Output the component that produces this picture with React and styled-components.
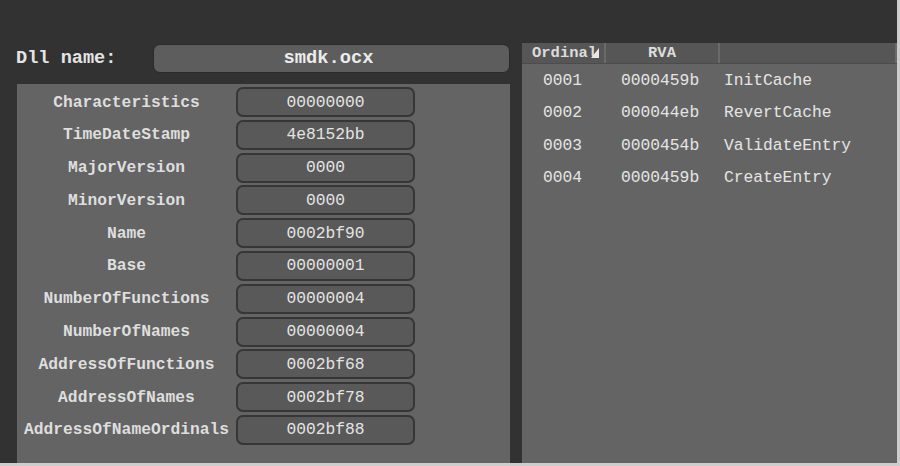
import React from "react";
import styled, { createGlobalStyle } from "styled-components";

const Global = createGlobalStyle`
  html, body {
    margin: 0;
    padding: 0;
    background: #cdcdcd;
  }
`;

const Frame = styled.div`
  width: 897px;
  height: 463px;
  background: #323232;
  box-sizing: border-box;
  padding: 42px 0 0 16px;
  display: grid;
  grid-template-columns: 494px 375px;
  column-gap: 12px;
  font-family: "Liberation Mono", "Courier New", monospace;
  color: #e2e2e2;
`;

const LeftCol = styled.div`
  display: flex;
  flex-direction: column;
  min-height: 0;
`;

const DllRow = styled.div`
  display: flex;
  align-items: center;
  height: 30px;
  margin-top: 1px;
`;

const DllLabel = styled.div`
  width: 137px;
  font-size: 18.6px;
  font-weight: bold;
  color: #e4e4e4;
`;

const DllBox = styled.div`
  flex: 1;
  height: 29px;
  box-sizing: border-box;
  border: 1px solid #2a2a2a;
  border-radius: 7px;
  background: #5d5d5d;
  display: flex;
  align-items: center;
  justify-content: center;
  font-size: 18.8px;
  font-weight: bold;
  color: #ececec;
  padding-right: 6px;
`;

const Panel = styled.div`
  flex: 1;
  margin: 11px 0 0 1px;
  background: #646464;
  padding-top: 3px;
  display: flex;
  flex-direction: column;
  gap: 2.8px;
`;

const Row = styled.div`
  display: grid;
  grid-template-columns: 219px 179px;
  align-items: center;
  height: 30px;
`;

const Label = styled.div`
  text-align: center;
  font-size: 16.3px;
  font-weight: bold;
  color: #dedede;
  white-space: nowrap;
`;

const ValueBox = styled.div`
  height: 30px;
  box-sizing: border-box;
  border: 2px solid #363636;
  border-radius: 7px;
  background: #595959;
  display: flex;
  align-items: center;
  justify-content: center;
  font-size: 16.3px;
  color: #e4e4e4;
`;

const RightPanel = styled.div`
  background: #646464;
  margin-top: 1px;
  display: flex;
  flex-direction: column;
`;

const Header = styled.div`
  display: grid;
  grid-template-columns: 84px 114px 1fr;
  height: 20px;
  background: #565656;
  border-bottom: 1px solid #4c4c4c;
`;

const HeadCell = styled.div`
  position: relative;
  overflow: hidden;
  display: flex;
  align-items: center;
  justify-content: ${(p) => (p.left ? "flex-start" : "center")};
  padding-left: ${(p) => (p.left ? "10px" : "0")};
  border-right: 2px solid #6a6a6a;
  font-size: 15.5px;
  font-weight: bold;
  color: #dcdcdc;
  white-space: nowrap;
`;

const SortMark = styled.svg`
  position: absolute;
  right: 4px;
  top: 4px;
`;

const TRow = styled.div`
  display: grid;
  grid-template-columns: 78px 103px 1fr;
  align-items: center;
  height: 32.5px;
  padding-left: 21px;
  font-size: 16.3px;
  color: #e4e4e4;
  white-space: nowrap;
`;

const fields = [
  ["Characteristics", "00000000"],
  ["TimeDateStamp", "4e8152bb"],
  ["MajorVersion", "0000"],
  ["MinorVersion", "0000"],
  ["Name", "0002bf90"],
  ["Base", "00000001"],
  ["NumberOfFunctions", "00000004"],
  ["NumberOfNames", "00000004"],
  ["AddressOfFunctions", "0002bf68"],
  ["AddressOfNames", "0002bf78"],
  ["AddressOfNameOrdinals", "0002bf88"],
];

const exportsList = [
  ["0001", "0000459b", "InitCache"],
  ["0002", "000044eb", "RevertCache"],
  ["0003", "0000454b", "ValidateEntry"],
  ["0004", "0000459b", "CreateEntry"],
];

export default function App() {
  return (
    <>
      <Global />
      <Frame>
        <LeftCol>
          <DllRow>
            <DllLabel>Dll name:</DllLabel>
            <DllBox>smdk.ocx</DllBox>
          </DllRow>
          <Panel>
            {fields.map(([k, v]) => (
              <Row key={k}>
                <Label>{k}</Label>
                <ValueBox>{v}</ValueBox>
              </Row>
            ))}
          </Panel>
        </LeftCol>
        <RightPanel>
          <Header>
            <HeadCell left>
              Ordinal
              <SortMark width="10" height="12" viewBox="0 0 10 12">
                <path d="M9 1 L9 11 L1 11 Z" fill="#e8e8e8" />
              </SortMark>
            </HeadCell>
            <HeadCell>RVA</HeadCell>
            <HeadCell />
          </Header>
          {exportsList.map(([o, rva, name]) => (
            <TRow key={o}>
              <span>{o}</span>
              <span>{rva}</span>
              <span>{name}</span>
            </TRow>
          ))}
        </RightPanel>
      </Frame>
    </>
  );
}
